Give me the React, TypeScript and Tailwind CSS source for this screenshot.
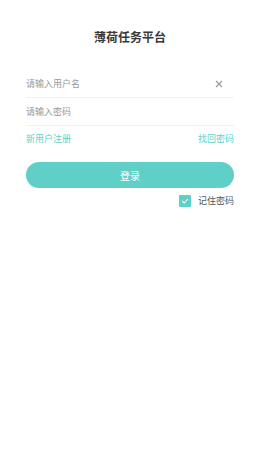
import React from "react";

export default function App() {
  return (
    <div
      className="w-[260px] h-[471px] bg-white flex flex-col px-[26px]"
      style={{ fontFamily: '"Noto Sans CJK SC", "Noto Sans", sans-serif' }}
    >
      <div className="pt-[29px] h-[70px] text-center text-[12px] leading-[16px] font-bold text-[#383838]">
        薄荷任务平台
      </div>
      <div className="h-[27px] flex items-center justify-between border-b border-[#f0f0f0] mt-[1px]">
        <span className="text-[9px] text-[#999999]">请输入用户名</span>
        <svg width="8" height="8" viewBox="0 0 8 8" className="mr-[11px]">
          <path d="M1 1 L7 7 M7 1 L1 7" stroke="#999" strokeWidth="1.1" />
        </svg>
      </div>
      <div className="h-[28px] flex items-center border-b border-[#f0f0f0]">
        <span className="text-[9px] text-[#999999]">请输入密码</span>
      </div>
      <div className="h-[26px] flex items-center justify-between text-[9px] text-[#5fcfc7]">
        <span>新用户注册</span>
        <span>找回密码</span>
      </div>
      <div className="mt-[10px] h-[26px] rounded-full bg-[#5fcfc7] flex items-center justify-center text-[10px] text-white">
        登录
      </div>
      <div className="mt-[6px] flex items-center justify-end gap-[7px]">
        <div className="w-[12px] h-[12px] bg-[#5fcfc7] rounded-[1px] flex items-center justify-center">
          <svg width="8" height="8" viewBox="0 0 8 8">
            <path d="M1.2 4.2 L3.2 6 L6.8 2" stroke="#fff" strokeWidth="1.1" fill="none" />
          </svg>
        </div>
        <span className="text-[9px] text-[#555555]">记住密码</span>
      </div>
    </div>
  );
}
